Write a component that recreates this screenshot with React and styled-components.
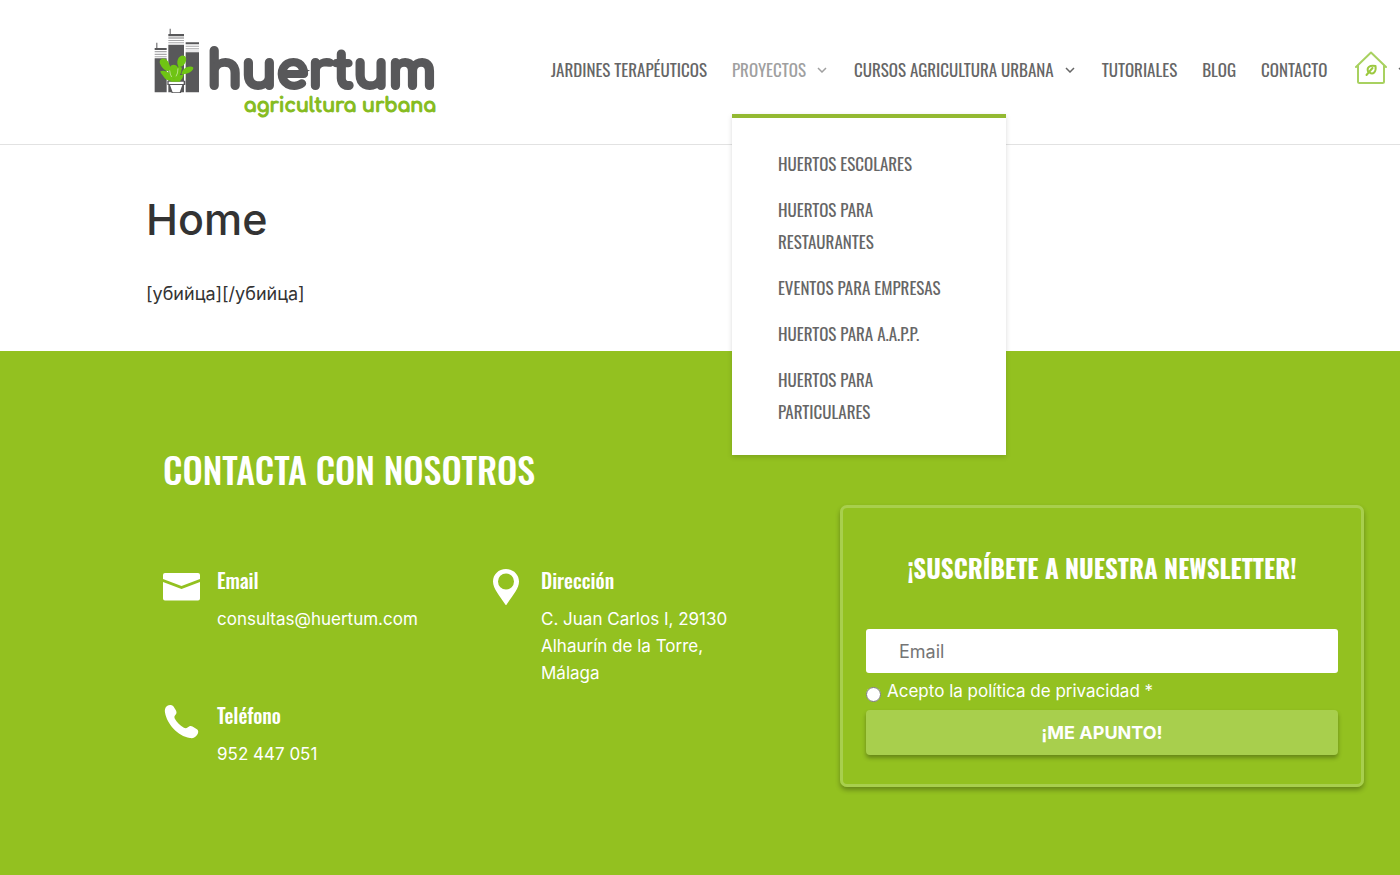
import React from "react";
import styled, { createGlobalStyle } from "styled-components";

const projects = [
  "Huertos escolares",
  "Huertos para restaurantes",
  "Eventos para empresas",
  "Huertos para A.A.P.P.",
  "Huertos para particulares",
];

const Chevron = () => (
  <svg width="12" height="6" viewBox="0 0 12 6" aria-hidden="true">
    <path d="M1 1l4 4 4-4" fill="none" stroke="currentColor" strokeWidth="1.5" />
  </svg>
);

const Buildings = () => (
  <svg width="47" height="67" viewBox="40 25 141 201" aria-hidden="true">
    <g fill="#58585a">
      <path d="M47 69h3v16h-3zM42 85h36v6H42zM42 116h36v102H42z" />
      <path d="M87 27h3v18h-3zM83 43h47v7H83zM83 75h47v143H83z" />
      <path d="M135 68h40v6h-40zM135 98h40v120h-40z" />
    </g>
    <g fill="#a9a9ab">
      <path d="M42 94h36v4H42zM42 102h36v4H42zM42 110h36v3H42z" />
      <path d="M83 53h47v4H83zM83 61h47v3H83zM83 68h47v3H83z" />
      <path d="M135 78h40v3h-40zM135 86h40v3h-40zM135 93h40v2h-40z" />
    </g>
    <path d="M80 183h54v13h-5l-8 24H93l-8-24h-5z" fill="#58585a" />
    <path d="M84 186h45v7H84zM88 196h37l-8 22H96z" fill="#fff" />
    <g fill="#6fc414">
      <path d="M58 122c5-8 17-8 23 2 5 8 10 20 8 30-9 3-20-5-26-13-4-6-8-12-5-19z" />
      <path d="M112 118c4-9 13-13 20-9 6 4 6 14 1 22-4 7-12 12-19 11-4-6-6-15-2-24z" />
      <path d="M88 142c4-8 17-9 23 0 5 9 3 24-4 35H93c-8-9-10-25-5-35z" />
      <path d="M59 155c8-4 21-1 28 8 5 6 8 14 7 20-11 1-20-4-25-12-4-6-9-10-10-16z" />
      <path d="M157 143c3 4-1 10-8 14-9 5-17 8-27 6 2-9 8-17 16-20 7-3 15-4 19 0z" />
      <path d="M84 158l16 20 14-38 10 4-3 15-4 8 13-3-5 12-8 10H90z" />
    </g>
    <path
      d="M87 152q1 13 6 20M112 146q0 16-6 24"
      fill="none"
      stroke="#d9efc0"
      strokeWidth="2"
    />
  </svg>
);

const House = () => (
  <svg width="35" height="38" viewBox="-3 0 35 38" aria-label="Huerto">
    <g fill="none" stroke="#a8d160" strokeWidth="2" strokeLinecap="round" strokeLinejoin="round">
      <path d="M1 16L16 1.500 31 16M3 15v15.500q0 1.500 1.500 1.500h23q1.500 0 1.500-1.500V15" />
      <path
        stroke="#9cc93f"
        d="M11.500 24l6-7M13.500 21.500c-2.500-5 1-7.500 7-6.500 1 6-2.500 9-6 6.500z"
      />
    </g>
  </svg>
);

const EmailIcon = () => (
  <svg width="38" height="38" viewBox="0 0 38 38" aria-hidden="true">
    <path
      fill="#fff"
      d="M2 6h33q2 0 2 2v4l-18.500 7L0 12V8q0-2 2-2zM0 15l18.500 7L37 15v16.500q0 2-2 2H2q-2 0-2-2z"
    />
  </svg>
);

const PinIcon = () => (
  <svg width="38" height="38" viewBox="0 0 38 38" aria-hidden="true">
    <path
      fill="#fff"
      fillRule="evenodd"
      d="M19 2c7.500 0 13 5.500 13 12.500C32 22 25 29 19 38.500 13 29 6 22 6 14.500 6 7.500 11.500 2 19 2zm0 4.500a8 8 0 1 0 0 16 8 8 0 0 0 0-16z"
    />
  </svg>
);

const PhoneIcon = () => (
  <svg width="38" height="38" viewBox="0 0 38 38" aria-hidden="true">
    <path
      fill="#fff"
      d="M4 4c2-1.500 5-1.500 6.500.5l2.500 4c1 2 .5 3.500-1 5-1 1-.5 2.500 0 3.500 2 3.500 5 6.500 8.500 8.500 1.500 1 3 1 4 0 1.500-1.500 3.500-2 5-1l4 2.500c2.500 1.500 2 4 .5 6-1.500 2.500-4 3.500-7 3C14.500 34 4 22 2 10.500 1.500 8 2 5.500 4 4z"
    />
  </svg>
);

const App = () => {
  return (
    <>
      <GlobalStyle />
      <Header>
        <Logo href="#">
          <Buildings />
          <LogoText>
            <LogoName>huertum</LogoName>
            <LogoTag>agricultura urbana</LogoTag>
          </LogoText>
        </Logo>
        <Nav>
          <NavItem>
            <NavLink href="#">Jardines terapéuticos</NavLink>
          </NavItem>
          <NavItem>
            <NavLink href="#" $active>
              Proyectos
              <Chevron />
            </NavLink>
            <SubMenu>
              {projects.map((project) => (
                <li key={project}>
                  <a href="#">{project}</a>
                </li>
              ))}
            </SubMenu>
          </NavItem>
          <NavItem>
            <NavLink href="#">
              Cursos agricultura urbana
              <Chevron />
            </NavLink>
          </NavItem>
          <NavItem>
            <NavLink href="#">Tutoriales</NavLink>
          </NavItem>
          <NavItem>
            <NavLink href="#">Blog</NavLink>
          </NavItem>
          <NavItem>
            <NavLink href="#">Contacto</NavLink>
          </NavItem>
          <NavItem>
            <NavLink href="#">
              <House />
              <Chevron />
            </NavLink>
          </NavItem>
        </Nav>
      </Header>
      <Main>
        <h1>Home</h1>
        <p>[убийца][/убийца]</p>
      </Main>
      <Footer>
        <section>
          <ContactTitle>Contacta con nosotros</ContactTitle>
          <ContactGrid>
            <ContactItem>
              <EmailIcon />
              <div>
                <h3>Email</h3>
                <p>consultas@huertum.com</p>
              </div>
            </ContactItem>
            <ContactItem>
              <PinIcon />
              <div>
                <h3>Dirección</h3>
                <p>
                  C. Juan Carlos I, 29130
                  <br />
                  Alhaurín de la Torre,
                  <br />
                  Málaga
                </p>
              </div>
            </ContactItem>
            <ContactItem>
              <PhoneIcon />
              <div>
                <h3>Teléfono</h3>
                <p>952 447 051</p>
              </div>
            </ContactItem>
          </ContactGrid>
        </section>
        <Newsletter>
          <h3>¡Suscríbete a nuestra newsletter!</h3>
          <EmailInput type="email" placeholder="Email" aria-label="Email" />
          <Privacy>
            <input type="radio" name="privacy" />
            Acepto la política de privacidad *
          </Privacy>
          <Submit type="button">¡ME APUNTO!</Submit>
        </Newsletter>
      </Footer>
    </>
  );
};

const condensed = `Oswald, "Roboto Condensed", "Liberation Sans Narrow", "Liberation Sans", sans-serif`;
const rounded = `Comfortaa, "Varela Round", Quicksand, Nunito, Inter, sans-serif`;

const GlobalStyle = createGlobalStyle`
  * {
    box-sizing: border-box;
  }
  body {
    margin: 0;
    overflow-x: hidden;
    background: #93c120;
    color: #333;
    font-family: Inter, "Liberation Sans", sans-serif;
    font-size: 18px;
    line-height: 27px;
  }
  h1, h2, h3, p, ul {
    margin: 0;
    padding: 0;
  }
  a {
    color: inherit;
    text-decoration: none;
  }
`;

const Header = styled.header`
  display: flex;
  align-items: flex-start;
  justify-content: space-between;
  height: 145px;
  padding-left: 11%;
  background: #fff;
  border-bottom: 1px solid #e2e2e2;
`;

const Logo = styled.a`
  display: flex;
  gap: 6px;
  padding-top: 28px;
`;

const LogoText = styled.span`
  display: flex;
  flex-direction: column;
  align-items: flex-end;
  font-family: ${rounded};
`;

const LogoName = styled.span`
  padding-top: 20px;
  color: #58585a;
  font-size: 51px;
  font-weight: 700;
  line-height: 48px;
  -webkit-text-stroke: 4px #58585a;
`;

const LogoTag = styled.span`
  color: #86bc1f;
  font-size: 19px;
  font-weight: 700;
  line-height: 20px;
  -webkit-text-stroke: 1px #86bc1f;
`;

const Nav = styled.ul`
  display: flex;
  flex: none;
  gap: 25px;
  width: 849px;
  list-style: none;
  color: #666;
  font-family: ${condensed};
  font-size: 17px;
  text-transform: uppercase;
`;

const NavItem = styled.li`
  position: relative;
  flex: none;
`;

const NavLink = styled.a`
  display: flex;
  align-items: center;
  gap: 11px;
  height: 139px;
  color: ${(props) => (props.$active ? "#a0a0a0" : "#666")};
`;

const SubMenu = styled.ul`
  position: absolute;
  top: 114px;
  left: 0;
  z-index: 2;
  width: 274px;
  padding: 23px 46px 20px;
  list-style: none;
  background: #fff;
  border-top: 4px solid #93b932;
  box-shadow: 0 2px 5px rgba(0, 0, 0, 0.15);
  line-height: 32px;
  li {
    padding: 7px 0;
  }
`;

const Main = styled.main`
  padding: 46px 146px 44px;
  background: #fff;
  h1 {
    font-size: 43px;
    font-weight: 500;
    line-height: 56px;
    margin-bottom: 33px;
  }
`;

const Footer = styled.footer`
  display: grid;
  grid-template-columns: minmax(0, 677fr) minmax(0, 524fr);
  align-items: start;
  padding: 92px 36px 88px 163px;
  background: #93c120;
  color: #fff;
`;

const ContactTitle = styled.h2`
  margin-bottom: 72px;
  font-family: ${condensed};
  font-size: 36px;
  font-weight: 500;
  line-height: 52px;
  text-transform: uppercase;
`;

const ContactGrid = styled.div`
  display: grid;
  grid-template-columns: 324fr 353fr;
  row-gap: 15px;
`;

const ContactItem = styled.div`
  display: flex;
  gap: 16px;
  h3 {
    margin-bottom: 12px;
    font-family: ${condensed};
    font-size: 20px;
    font-weight: 500;
    line-height: 27px;
  }
  p {
    font-size: 17px;
  }
`;

const Newsletter = styled.form`
  display: flex;
  flex-direction: column;
  margin-top: 62px;
  padding: 40px 23px 29px;
  border: 3px solid #a8cf4d;
  border-radius: 7px;
  box-shadow: 0 3px 5px rgba(0, 0, 0, 0.3);
  h3 {
    margin-bottom: 41px;
    font-family: ${condensed};
    font-size: 25px;
    font-weight: 700;
    line-height: 40px;
    text-align: center;
    text-transform: uppercase;
  }
`;

const EmailInput = styled.input`
  height: 44px;
  padding: 0 33px;
  border: none;
  border-radius: 3px;
  background: #fff;
  font: inherit;
  &::placeholder {
    color: #757575;
  }
`;

const Privacy = styled.label`
  display: flex;
  align-items: center;
  gap: 6px;
  height: 37px;
  font-size: 17px;
  input {
    width: 15px;
    height: 15px;
    margin: 5px 0 0;
  }
`;

const Submit = styled.button`
  height: 45px;
  border: none;
  border-radius: 4px;
  background: #a8cf4d;
  box-shadow: 0 3px 4px rgba(0, 0, 0, 0.3);
  color: #fff;
  font: inherit;
  font-weight: 700;
`;

export default App;
